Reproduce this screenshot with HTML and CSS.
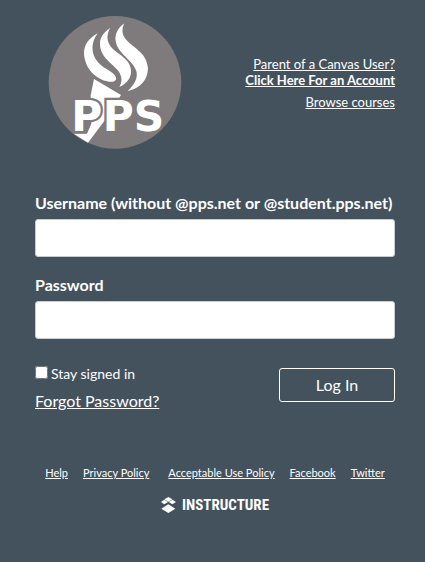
FILE: index.html
```html
<!DOCTYPE html>
<html lang="en">
<head>
<meta charset="utf-8">
<meta name="viewport" content="width=device-width, initial-scale=1">
<title>Log In to Canvas</title>
<link rel="stylesheet" href="styles.css">
</head>
<body>
<div class="login">
  <header class="header">
    <svg class="logo" viewBox="24 21 402 402" role="img" aria-label="PPS">
      <circle cx="225" cy="223" r="199" fill="#7f7b7c"/>
      <g fill="#fff">
        <path d="M173 76C145 91 131 113 132 138C135 180 165 214 207 221C225 224 233 215 226 204C215 188 191 183 174 163C151 136 153 103 173 76Z"/>
        <path d="M211 60C188 74 179 91 180 111C183 151 218 166 235 189C247 206 247 222 238 237C263 225 275 207 273 185C268 147 227 139 209 111C199 94 201 77 211 60Z"/>
        <path d="M253 46C232 62 224 80 227 99C234 139 277 154 289 189C295 212 282 230 263 249C301 242 323 216 324 181C320 129 275 121 253 88C245 74 246 61 253 46Z"/>
        <path d="M162 213L243 261L207 320L144 404L101 377L141 377L154 347L152 262Z"/>
      </g>
      <g class="logo-text">
        <text x="94" y="369">P</text>
        <text x="188" y="369">P</text>
        <text x="281" y="369">S</text>
      </g>
    </svg>
    <nav class="header-links">
      <a href="#">Parent of a Canvas User?<br><strong>Click Here For an Account</strong></a>
      <a href="#">Browse courses</a>
    </nav>
  </header>
  <form class="form">
    <div class="field">
      <label for="username">Username (without @pps.net or @student.pps.net)</label>
      <input id="username" type="text">
    </div>
    <div class="field">
      <label for="password">Password</label>
      <input id="password" type="password">
    </div>
    <div class="actions">
      <div class="options">
        <div class="remember">
          <input id="remember" type="checkbox">
          <label for="remember">Stay signed in</label>
        </div>
        <a class="forgot" href="#">Forgot Password?</a>
      </div>
      <button class="submit" type="submit">Log In</button>
    </div>
  </form>
  <footer class="footer">
    <nav class="footer-links">
      <a href="#">Help</a>
      <a class="privacy" href="#">Privacy Policy</a>
      <a href="#">Acceptable Use Policy</a>
      <a href="#">Facebook</a>
      <a href="#">Twitter</a>
    </nav>
    <a class="brand" href="#">
      <svg class="brand-mark" viewBox="0 0 45 48" aria-hidden="true">
        <path fill="#fff" d="M22 0L34 7L22 14L10 7ZM10 8L21 15L10 22L0 15ZM34 8L45 15L34 22L23 15ZM22 22L43 35L22 48L1 35Z"/>
      </svg>
      <span>INSTRUCTURE</span>
    </a>
  </footer>
</div>
</body>
</html>
```
FILE: styles.css
```css
* {
  box-sizing: border-box;
}

body {
  margin: 0;
  background: #44525d;
  color: #fff;
  font-family: Lato, "Liberation Sans", sans-serif;
  font-size: 16px;
  line-height: 20px;
}

a {
  color: inherit;
}

.login {
  padding: 15px 30px 40px 35px;
}

.header {
  display: flex;
  align-items: center;
  justify-content: space-between;
  padding-left: 13px;
}

.logo {
  width: 134px;
  height: 134px;
}

.logo-text {
  font-family: "DejaVu Sans", sans-serif;
  font-size: 127px;
  font-weight: 700;
  fill: #fff;
  stroke: #7f7b7c;
  stroke-width: 14px;
  paint-order: stroke;
}

.header-links {
  display: flex;
  flex-direction: column;
  gap: 6px;
  padding-top: 2px;
  font-size: 13px;
  line-height: 16px;
  text-align: right;
}

.form {
  margin-top: 44px;
}

.field {
  margin-bottom: 18px;
}

.field label {
  display: block;
  margin-bottom: 6px;
  font-weight: 700;
}

.field input {
  display: block;
  width: 100%;
  height: 38px;
  padding: 0 12px;
  border: 1px solid #c7cdd1;
  border-radius: 3px;
  background: #fff;
  color: #2d3b45;
  font: inherit;
}

.actions {
  display: flex;
  justify-content: space-between;
  align-items: flex-start;
  margin-top: 25px;
}

.remember {
  display: flex;
  align-items: center;
  gap: 3px;
  margin-bottom: 7px;
  font-size: 14px;
}

.remember input {
  width: 13px;
  height: 13px;
  margin: 0 0 4px;
}

.submit {
  width: 116px;
  height: 34px;
  margin-top: 4px;
  border: 1px solid #fff;
  border-radius: 3px;
  background: transparent;
  color: #fff;
  font: inherit;
}

.footer {
  display: flex;
  flex-direction: column;
  align-items: center;
  gap: 12px;
  margin-top: 52px;
}

.footer-links {
  display: flex;
  gap: 15px;
  font-size: 11px;
  white-space: nowrap;
}

.privacy {
  margin-right: 4px;
}

.brand {
  display: flex;
  align-items: center;
  gap: 6px;
  font-family: "Roboto Condensed", Roboto, sans-serif;
  font-size: 15px;
  font-weight: 700;
  text-decoration: none;
}

.brand-mark {
  width: 15px;
  height: 16px;
}
```
